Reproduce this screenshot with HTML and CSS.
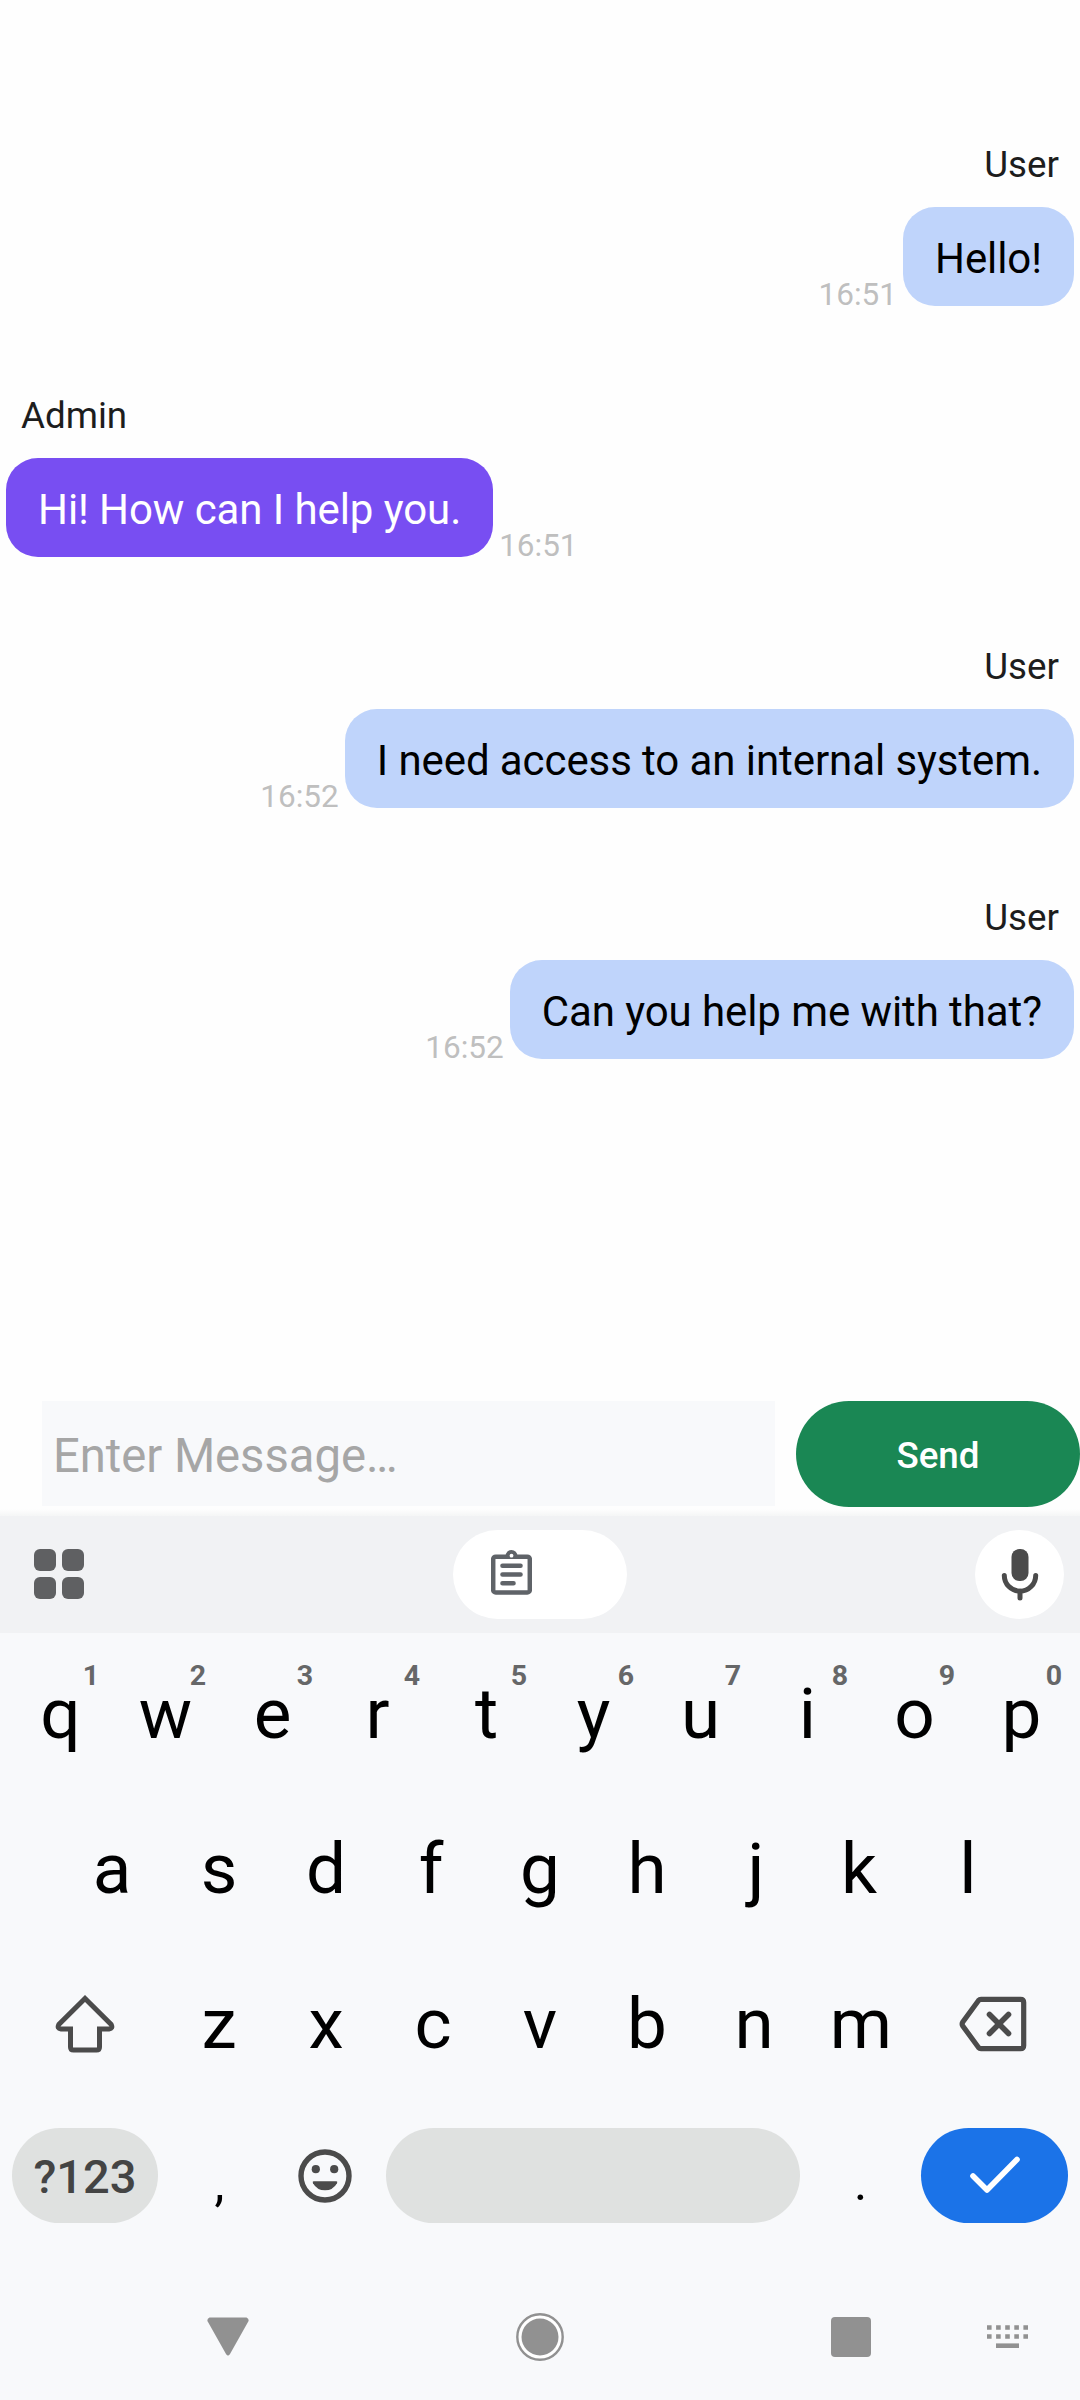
FILE: index.html
```html
<!DOCTYPE html>
<html lang="en">
<head>
<meta charset="utf-8">
<title>Chat</title>
<link rel="stylesheet" href="styles.css">
</head>
<body>
<main class="chat">
  <section class="messages">
    <article class="message mine">
      <div class="name">User</div>
      <div class="line"><time class="time">16:51</time><p class="bubble">Hello!</p></div>
    </article>
    <article class="message theirs">
      <div class="name">Admin</div>
      <div class="line"><p class="bubble">Hi! How can I help you.</p><time class="time">16:51</time></div>
    </article>
    <article class="message mine">
      <div class="name">User</div>
      <div class="line"><time class="time">16:52</time><p class="bubble">I need access to an internal system.</p></div>
    </article>
    <article class="message mine">
      <div class="name">User</div>
      <div class="line"><time class="time">16:52</time><p class="bubble">Can you help me with that?</p></div>
    </article>
  </section>
  <form class="composer">
    <div class="field">Enter Message…</div>
    <button class="send" type="button">Send</button>
  </form>
</main>
<section class="keyboard">
  <div class="toolbar">
    <svg class="apps" width="50" height="50" viewBox="0 0 50 50"><g fill="#5f6062"><rect width="22" height="22" rx="6"/><rect x="28" width="22" height="22" rx="6"/><rect y="28" width="22" height="22" rx="6"/><rect x="28" y="28" width="22" height="22" rx="6"/></g></svg>
    <div class="clip">
      <svg width="41" height="45" viewBox="0 0 41 45"><rect x="2.200" y="6.700" width="36.600" height="35.800" rx="2.500" fill="none" stroke="#5f6368" stroke-width="4.500"/><path d="M14.500 6a6 6 0 0 1 12 0z" fill="#5f6368"/><circle cx="20.500" cy="5.700" r="1.900" fill="#fff"/><path d="M11.500 15.700H29.500M11.500 24.500H29.500M11.500 33.300H22.500" stroke="#5f6368" stroke-width="4.600" stroke-linecap="round"/></svg>
    </div>
    <div class="mic">
      <svg width="38" height="52" viewBox="0 0 38 52"><rect x="10.500" y="0" width="17" height="32" rx="8" fill="#4b4b4b"/><path d="M3.300 26.500a15.700 15.700 0 0 0 31.400 0M19 42v7" fill="none" stroke="#4b4b4b" stroke-width="5" stroke-linecap="round"/></svg>
    </div>
  </div>
  <div class="keys">
    <div class="row">
      <div class="key nudge-right">q<span class="hint">1</span></div><div class="key">w<span class="hint">2</span></div><div class="key">e<span class="hint">3</span></div><div class="key nudge-left">r<span class="hint">4</span></div><div class="key">t<span class="hint">5</span></div><div class="key">y<span class="hint">6</span></div><div class="key">u<span class="hint">7</span></div><div class="key">i<span class="hint">8</span></div><div class="key">o<span class="hint">9</span></div><div class="key">p<span class="hint">0</span></div>
    </div>
    <div class="row">
      <div class="key">a</div><div class="key">s</div><div class="key">d</div><div class="key nudge-left">f</div><div class="key">g</div><div class="key">h</div><div class="key nudge-right">j</div><div class="key nudge-left">k</div><div class="key">l</div>
    </div>
    <div class="row">
      <div class="key wide"><svg width="60" height="58" viewBox="0 0 60 58"><path d="M30 3.500L3.800 29.500Q1.800 33.500 6 34H15.500V52Q15.500 55 18.500 55H41.500Q44.500 55 44.500 52V34H54Q58.200 33.500 56.200 29.500Z" fill="none" stroke="#4b4b4b" stroke-width="5"/></svg></div>
      <div class="key">z</div><div class="key">x</div><div class="key">c</div><div class="key">v</div><div class="key">b</div><div class="key">n</div><div class="key">m</div>
      <div class="key wide erase"><svg width="68" height="56" viewBox="0 0 68 56"><path d="M22 3.300H61.500Q64.700 3.300 64.700 6.500V49.500Q64.700 52.700 61.500 52.700H22Q20.500 52.700 19.500 51.500L3.800 30Q2.500 28 3.800 26L19.500 4.500Q20.500 3.300 22 3.300Z" fill="none" stroke="#4b4b4b" stroke-width="5.200"/><path d="M30.500 18.500L49.500 37.500M49.500 18.500L30.500 37.500" stroke="#4b4b4b" stroke-width="5.600" stroke-linecap="round"/></svg></div>
    </div>
    <div class="row bottom">
      <div class="pill symbols">?123</div>
      <div class="key punct">,</div>
      <div class="key emoji"><svg width="54" height="54" viewBox="0 0 54 54"><circle cx="27" cy="27" r="24" fill="none" stroke="#4b4b4b" stroke-width="5.400"/><circle cx="17.800" cy="20.200" r="4.100" fill="#4b4b4b"/><circle cx="36.200" cy="20.200" r="4.100" fill="#4b4b4b"/><path d="M15.700 32.300H38.300Q40 32.300 39 34.200Q35 41.300 27 41.300T15 34.200Q14 32.300 15.700 32.300Z" fill="#4b4b4b"/></svg></div>
      <div class="pill space"></div>
      <div class="key dot">.</div>
      <div class="pill enter"><svg width="52" height="40" viewBox="0 0 52 40"><path d="M4 20L18 34L48 3.500" fill="none" stroke="#fff" stroke-width="5.600" stroke-linecap="round" stroke-linejoin="round"/></svg></div>
    </div>
  </div>
  <nav class="nav">
    <svg class="back" width="42" height="40" viewBox="0 0 42 40"><path d="M2.500 0.500H39.500Q42.500 2 41.300 4.500L23 37Q21 40 19 37L0.700 4.500Q-.5 2 2.500 .5Z" fill="#919191"/></svg>
    <svg class="home" width="48" height="48" viewBox="0 0 48 48"><circle cx="24" cy="24" r="22.700" fill="#fff" stroke="#919191" stroke-width="2.400"/><circle cx="24" cy="24" r="18.500" fill="#919191"/></svg>
    <svg class="recent" width="40" height="40" viewBox="0 0 40 40"><rect width="40" height="40" rx="4" fill="#919191"/></svg>
    <svg class="ime" width="41" height="24" viewBox="0 0 41 24"><path d="M0 2.500H41M0 11.500H41" stroke="#919191" stroke-width="4.600" stroke-dasharray="4.600 4.500"/><path d="M9 20.700H32" stroke="#919191" stroke-width="4.600"/></svg>
  </nav>
</section>
</body>
</html>
```
FILE: styles.css
```css
* { box-sizing: border-box; }
body { margin: 0; width: 1080px; height: 2400px; display: flex; flex-direction: column; background: #fefefe; font-family: Roboto, sans-serif; overflow: hidden; }
svg { display: block; flex: none; }
.chat { height: 1516px; display: flex; flex-direction: column; flex: none; background: linear-gradient(#fefefe 1509px, #f5f6f6 1516px); }
.messages { flex: 1; padding: 140px 6px 0; display: flex; flex-direction: column; gap: 84px; }
.message { display: flex; flex-direction: column; gap: 17px; height: 167px; }
.name { padding: 0 15px; font-size: 36.75px; line-height: 50px; color: #1d1d1d; }
.line { display: flex; align-items: flex-end; gap: 6px; height: 99px; }
.mine { align-items: flex-end; }
.theirs { align-items: flex-start; }
.bubble { margin: 0; height: 99px; padding: 4px 32px 0; border-radius: 32px; font-size: 42px; line-height: 95px; letter-spacing: -0.08px; white-space: nowrap; background: #bfd4fb; color: #000; }
.theirs .bubble { background: #784ef2; color: #fff; }
.time { font-size: 31.5px; line-height: 22px; color: #bfbfbf; }
.composer { display: flex; align-items: flex-start; height: 115px; padding-left: 42px; gap: 21px; }
.field { width: 733px; height: 105px; padding: 5px 11px 0; font-size: 47.25px; line-height: 100px; letter-spacing: -0.05px; color: #a6a6a6; background: #f8f9fb; }
.send { flex: 1; height: 106px; border: 0; border-radius: 53px; padding: 2px 0 0; background: #1a8754; color: #fff; font: 500 36.75px Roboto, sans-serif; }
.keyboard { flex: 1; display: flex; flex-direction: column; background: #f8f9fb; }
.toolbar { height: 117px; padding: 0 16px 0 34px; display: flex; align-items: center; justify-content: space-between; background: #f1f2f4; }
.apps { margin-top: -1px; }
.clip { width: 174px; height: 89px; margin: 0 0 0 21px; border-radius: 45px; background: #fff; display: flex; align-items: center; padding-left: 38px; }
.clip svg { margin-top: -4px; }
.mic { width: 89px; height: 89px; border-radius: 50%; background: #fff; display: flex; align-items: center; justify-content: center; }
.keys { padding-top: 3px; }
.row { display: flex; justify-content: center; height: 155px; }
.key { position: relative; width: 107px; text-align: center; font-size: 71px; line-height: 155px; color: #000; }
.nudge-left { padding-right: 4px; }
.nudge-right { padding-left: 4px; }
.hint { position: absolute; top: 23px; right: 13px; font-size: 28.5px; line-height: 34px; font-weight: 700; color: #666768; }
.key.wide { width: 160.5px; display: flex; align-items: center; justify-content: center; }
.key.erase { padding-right: 4px; }
.row.bottom { height: 95px; margin-top: 27px; justify-content: flex-start; padding-left: 12px; }
.pill { height: 95px; border-radius: 48px; background: #dfe1e0; display: flex; align-items: center; justify-content: center; }
.symbols { width: 146px; font-size: 47px; font-weight: 500; color: #444; padding-top: 1px; }
.key.punct, .key.dot { font-size: 50px; line-height: 110px; }
.key.punct { margin-left: 8px; }
.key.emoji { display: flex; align-items: center; justify-content: center; padding-right: 3px; }
.space { width: 414px; margin-left: 6px; }
.dot { margin-left: 7px; }
.enter { width: 147px; margin-left: 7px; background: #1b73e8; }
.nav { margin-top: auto; height: 126px; padding-left: 207px; display: flex; align-items: center; }
.home { margin-left: 267px; }
.recent { margin-left: 267px; }
.ime { margin-left: 116px; }
```
